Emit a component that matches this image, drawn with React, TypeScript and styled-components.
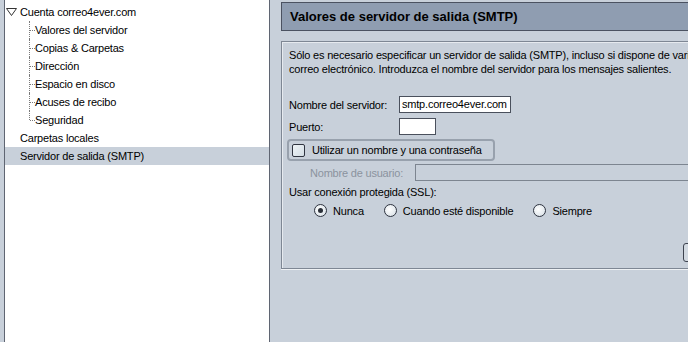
import React from "react";
import styled, { createGlobalStyle } from "styled-components";

const Global = createGlobalStyle`
  html, body { margin: 0; padding: 0; }
  body {
    background: #c8d0da;
    font-family: "Liberation Sans", Arial, sans-serif;
    font-size: 11px;
    letter-spacing: -0.2px;
    color: #000;
    overflow: hidden;
  }
`;

const Shell = styled.div`
  display: flex;
  width: 688px;
  height: 342px;
  background: #c8d0da;
  overflow: hidden;
`;

const Sidebar = styled.div`
  margin-left: 4px;
  width: 264px;
  flex: none;
  background: #fff;
  border-left: 1px solid #5f6572;
  border-right: 1px solid #5f6572;
  padding-top: 3px;
  box-sizing: content-box;
`;

const Row = styled.div<{ $indent: number; $selected?: boolean }>`
  position: relative;
  height: 18px;
  line-height: 18px;
  padding-left: ${(p) => p.$indent}px;
  background: ${(p) => (p.$selected ? "#c8d0da" : "transparent")};
  white-space: nowrap;
  display: flex;
  align-items: center;
`;

const ChildRow = styled(Row)<{ $last?: boolean }>`
  &::before {
    content: "";
    position: absolute;
    left: 24px;
    top: 0;
    height: ${(p) => (p.$last ? "9px" : "18px")};
    border-left: 1px dotted #7a7a7a;
  }
  &::after {
    content: "";
    position: absolute;
    left: 25px;
    top: 9px;
    width: 5px;
    border-top: 1px dotted #7a7a7a;
  }
`;

const Twisty = styled.svg`
  width: 11px;
  height: 8px;
  margin-right: 3px;
  flex: none;
`;

const Main = styled.div`
  flex: 1;
  margin-left: 11px;
  padding-top: 2px;
  display: flex;
  flex-direction: column;
  min-width: 0;
`;

const TitleBar = styled.div`
  height: 27px;
  width: 420px;
  background: #8f9db1;
  border: 1px solid #4b5261;
  border-right: none;
  display: flex;
  align-items: center;
  padding-left: 8px;
  font-weight: bold;
  font-size: 13px;
  letter-spacing: 0;
  color: #000;
  white-space: nowrap;
`;

const ContentBox = styled.div`
  margin-top: 10px;
  height: 228px;
  width: 420px;
  border: 1px solid #7e8794;
  border-right: none;
  box-shadow: inset 1px 1px 0 #e6eaef, 0 1px 0 #eef1f4;
  padding: 6px 0 0 7px;
  box-sizing: border-box;
  display: flex;
  flex-direction: column;
  position: relative;
  white-space: nowrap;
  overflow: hidden;
`;

const Paragraph = styled.div`
  line-height: 14px;
`;

const FieldRow = styled.div<{ $top: number }>`
  display: flex;
  align-items: center;
  margin-top: ${(p) => p.$top}px;
`;

const Label = styled.span<{ $width?: number; $disabled?: boolean; $pad?: number }>`
  width: ${(p) => (p.$width ? `${p.$width}px` : "auto")};
  padding-left: ${(p) => p.$pad ?? 0}px;
  flex: none;
  color: ${(p) => (p.$disabled ? "#8b939e" : "#000")};
`;

const TextInput = styled.div<{ $width: number; $disabled?: boolean }>`
  width: ${(p) => p.$width}px;
  height: 17px;
  box-sizing: border-box;
  border: 1px solid ${(p) => (p.$disabled ? "#7d8590" : "#4a505c")};
  background: ${(p) => (p.$disabled ? "#c8d0da" : "#fff")};
  padding-left: 2px;
  line-height: 15px;
  overflow: hidden;
  flex: none;
`;

const CheckGroup = styled.div`
  margin-top: 4px;
  margin-left: -2px;
  width: 208px;
  height: 22px;
  box-sizing: border-box;
  border: 2px solid #98a1ad;
  border-radius: 4px;
  display: flex;
  align-items: center;
  padding-left: 3px;
`;

const Box = styled.span`
  width: 11px;
  height: 11px;
  border: 1px solid #2f3440;
  border-radius: 2px;
  background: linear-gradient(135deg, #eef3f6, #d3dde4);
  margin-right: 7px;
  flex: none;
`;

const RadioRow = styled.div`
  display: flex;
  align-items: center;
  margin-top: 6px;
  padding-left: 25px;
`;

const Radio = styled.span<{ $on?: boolean }>`
  width: 11px;
  height: 11px;
  border: 1px solid #2f3440;
  border-radius: 50%;
  background: radial-gradient(circle at 40% 40%, #ffffff, #d4dde4);
  margin-right: 6px;
  flex: none;
  display: flex;
  align-items: center;
  justify-content: center;
  &::after {
    content: "";
    width: 5px;
    height: 5px;
    border-radius: 50%;
    background: ${(p) => (p.$on ? "#2a2f38" : "transparent")};
  }
`;

const RadioItem = styled.label<{ $gap: number }>`
  display: flex;
  align-items: center;
  margin-right: ${(p) => p.$gap}px;
`;

const EdgeButton = styled.div`
  position: absolute;
  left: 401px;
  top: 201px;
  width: 30px;
  height: 17px;
  border: 1px solid #3d434f;
  border-radius: 3px;
  background: #d2d9e1;
`;

const children = [
  "Valores del servidor",
  "Copias & Carpetas",
  "Dirección",
  "Espacio en disco",
  "Acuses de recibo",
  "Seguridad",
];

export default function App() {
  return (
    <>
      <Global />
      <Shell>
        <Sidebar>
          <Row $indent={1}>
            <Twisty viewBox="0 0 11 8">
              <path d="M0.5 0.5 H10.5 L5.5 7.5 Z" fill="#fff" stroke="#333" strokeWidth="1" />
            </Twisty>
            Cuenta correo4ever.com
          </Row>
          {children.map((c, i) => (
            <ChildRow key={c} $indent={30} $last={i === children.length - 1}>
              {c}
            </ChildRow>
          ))}
          <Row $indent={15}>Carpetas locales</Row>
          <Row $indent={15} $selected>
            Servidor de salida (SMTP)
          </Row>
        </Sidebar>
        <Main>
          <TitleBar>Valores de servidor de salida (SMTP)</TitleBar>
          <ContentBox>
            <Paragraph>
              Sólo es necesario especificar un servidor de salida (SMTP), incluso si dispone de varias cuentas de
              <br />
              correo electrónico. Introduzca el nombre del servidor para los mensajes salientes.
            </Paragraph>
            <FieldRow $top={20}>
              <Label $width={110}>Nombre del servidor:</Label>
              <TextInput $width={112}>smtp.correo4ever.com</TextInput>
            </FieldRow>
            <FieldRow $top={5}>
              <Label $width={110}>Puerto:</Label>
              <TextInput $width={37}></TextInput>
            </FieldRow>
            <CheckGroup>
              <Box />
              Utilizar un nombre y una contraseña
            </CheckGroup>
            <FieldRow $top={3}>
              <Label $width={105} $pad={21} $disabled>
                Nombre de usuario:
              </Label>
              <TextInput $width={300} $disabled></TextInput>
            </FieldRow>
            <FieldRow $top={5}>
              <Label>Usar conexión protegida (SSL):</Label>
            </FieldRow>
            <RadioRow>
              <RadioItem $gap={20}>
                <Radio $on />
                Nunca
              </RadioItem>
              <RadioItem $gap={20}>
                <Radio />
                Cuando esté disponible
              </RadioItem>
              <RadioItem $gap={0}>
                <Radio />
                Siempre
              </RadioItem>
            </RadioRow>
            <EdgeButton />
          </ContentBox>
        </Main>
      </Shell>
    </>
  );
}
